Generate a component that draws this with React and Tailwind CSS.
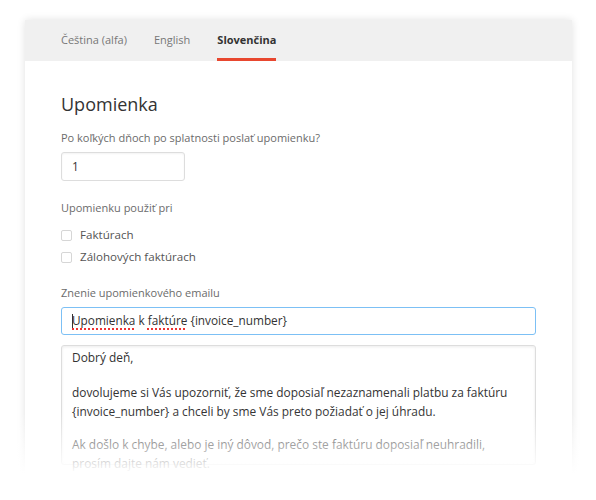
import { useState } from "react";

const TABS = ["Čeština (alfa)", "English", "Slovenčina"];

const Checkbox = ({ label }) => (
  <label className="flex h-[22px] items-center gap-[8px] text-[11.6px] text-[#555]">
    <span className="h-[11px] w-[11px] rounded-[2px] border border-[#d6d6d6] bg-white" />
    {label}
  </label>
);

const App = () => {
  const [active] = useState(2);

  return (
    <div
      className="relative h-[500px] w-[596px] overflow-hidden bg-white pt-5"
      style={{ fontFamily: '"Open Sans", "Noto Sans", sans-serif' }}
    >
      <div className="mx-[25px] w-[547px] bg-white shadow-[0_0_8px_rgba(0,0,0,0.12)]">
        <div className="flex h-[41px] gap-[27px] bg-[#f0f0f0] px-9">
          {TABS.map((tab, i) => (
            <div
              key={tab}
              className={
                i === active
                  ? "flex items-center border-b-[3px] border-[#e8472f] pt-[3px] text-[11px] font-bold text-[#333]"
                  : "flex items-center text-[11px] text-[#777]"
              }
            >
              {tab}
            </div>
          ))}
        </div>

        <div className="px-9 pb-10 pt-[30px]">
          <h1 className="text-[18px] leading-[26px] text-[#333]">Upomienka</h1>

          <p className="mt-[12px] text-[11px] leading-[18px] text-[#6b6b6b]">
            Po koľkých dňoch po splatnosti poslať upomienku?
          </p>
          <div className="mt-[5px] flex h-[29px] w-[124px] items-center rounded-[3px] border border-[#ddd] px-[10px] text-[11.8px] text-[#333] shadow-[inset_0_1px_2px_rgba(0,0,0,0.05)]">
            1
          </div>

          <p className="mt-[18px] text-[11px] leading-[18px] text-[#6b6b6b]">
            Upomienku použiť pri
          </p>
          <div className="mt-[7px] flex flex-col">
            <Checkbox label="Faktúrach" />
            <Checkbox label="Zálohových faktúrach" />
          </div>

          <p className="mt-[16px] text-[11px] leading-[18px] text-[#6b6b6b]">
            Znenie upomienkového emailu
          </p>
          <div className="mt-[5px] flex h-[28px] items-center rounded-[3px] border border-[#7cc0f5] px-[10px] text-[11.8px] text-[#333]">
            <span className="mr-[-1px] h-[15px] w-px bg-[#333]" />
            <span className="underline decoration-[#e33] decoration-dotted decoration-[1.5px] underline-offset-[3px]">
              Upomienka
            </span>
            <span>&nbsp;k&nbsp;</span>
            <span className="underline decoration-[#e33] decoration-dotted decoration-[1.5px] underline-offset-[3px]">
              faktúre
            </span>
            <span>&nbsp;{"{invoice_number}"}</span>
          </div>

          <div className="mt-[10px] h-[120px] rounded-[3px] border border-[#ddd] px-[10px] pt-[2px] text-[11.9px] leading-[19px] text-[#333] shadow-[inset_0_1px_3px_rgba(0,0,0,0.08)]">
            <p>Dobrý deň,</p>
            <p className="mt-[16px]">
              dovolujeme si Vás upozorniť, že sme doposiaľ nezaznamenali platbu za faktúru{" "}
              {"{invoice_number}"} a chceli by sme Vás preto požiadať o jej úhradu.
            </p>
            <p className="mt-[14px]">
              Ak došlo k chybe, alebo je iný dôvod, prečo ste faktúru doposiaľ neuhradili,
              prosím dajte nám vedieť.
            </p>
          </div>
        </div>
      </div>

      <div className="pointer-events-none absolute inset-x-0 bottom-0 top-[412px] bg-gradient-to-b from-white/0 via-white via-70% to-white" />
    </div>
  );
};

export default App;
